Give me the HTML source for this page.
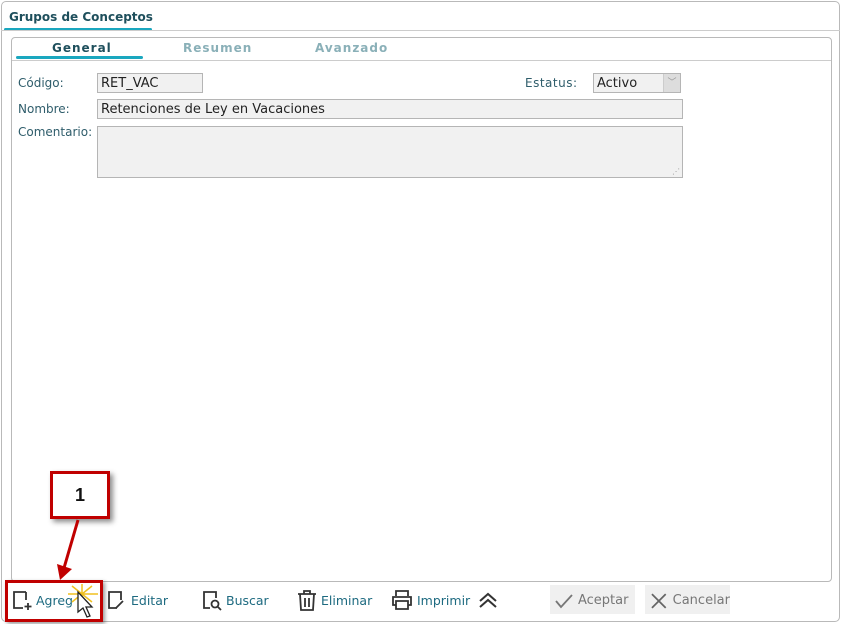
<!DOCTYPE html>
<html><head><meta charset="utf-8"><style>
*{box-sizing:border-box;margin:0;padding:0}
body{width:841px;height:624px;background:#fff;position:relative;overflow:hidden;font-family:"DejaVu Sans","Liberation Sans",sans-serif;font-size:12px;color:#333}
.a{position:absolute}
.lbl{color:#2f5d6b;font-size:12px}
.inp{background:#f1f1f1;border:1px solid #b5b5b5;font-size:13px;color:#222;padding:2px 3px 0;font-family:"DejaVu Sans",sans-serif}
.tb{position:absolute;top:589px;height:22px;display:flex;align-items:center;color:#1d6a80;font-size:12.5px}
.tb svg{margin-right:4px}
</style></head><body>
<div class="a" style="left:1px;top:1px;width:839px;height:621px;border:1px solid #b9b9b9;border-radius:5px"></div>
<div class="a" style="left:9px;top:10px;font-weight:bold;font-size:12px;color:#1e4f5c">Grupos de Conceptos</div>
<div class="a" style="left:4px;top:28px;width:148px;height:3px;background:#1aa7bf;border-radius:2px"></div>
<div class="a" style="left:1px;top:30px;width:839px;height:1px;background:#ccc"></div>
<div class="a" style="left:11px;top:37px;width:821px;height:545px;border:1px solid #b9b9b9;border-radius:4px"></div>
<div class="a" style="left:12px;top:60px;width:819px;height:1px;background:#ccc"></div>
<div class="a" style="left:52px;top:41px;font-weight:bold;font-size:12px;color:#1e4f5c;letter-spacing:1px">General</div>
<div class="a" style="left:183px;top:41px;font-weight:bold;font-size:12px;color:#8ab0b8;letter-spacing:1px">Resumen</div>
<div class="a" style="left:315px;top:41px;font-weight:bold;font-size:12px;color:#8ab0b8;letter-spacing:1px">Avanzado</div>
<div class="a" style="left:16px;top:56px;width:127px;height:3px;background:#1aa7bf;border-radius:2px"></div>

<div class="a lbl" style="left:18px;top:76px">Código:</div>
<div class="a inp" style="left:97px;top:73px;width:106px;height:20px">RET_VAC</div>
<div class="a lbl" style="left:525px;top:76px;letter-spacing:0.5px">Estatus:</div>
<div class="a inp" style="left:593px;top:73px;width:88px;height:20px">Activo</div>
<div class="a" style="left:663px;top:74px;width:17px;height:18px;background:#ddd;border-left:1px solid #ccc;color:#999;font-size:9px;text-align:center;line-height:18px">﹀</div>
<div class="a lbl" style="left:18px;top:102px">Nombre:</div>
<div class="a inp" style="left:97px;top:99px;width:586px;height:20px">Retenciones de Ley en Vacaciones</div>
<div class="a lbl" style="left:18px;top:125px">Comentario:</div>
<div class="a inp" style="left:97px;top:126px;width:586px;height:52px"></div>
<div class="a" style="left:672px;top:167px;color:#999;font-size:8px">⋰</div>

<div class="tb" style="left:12px">
<svg width="20" height="22" viewBox="0 0 20 22" fill="none" stroke="#333" stroke-width="1.8"><path d="M14 3H2v16h9"/><path d="M14 3v8"/><path d="M16 14v7M12.5 17.5h7"/></svg>Agreg</div>
<div class="tb" style="left:107px">
<svg width="20" height="22" viewBox="0 0 20 22" fill="none" stroke="#333" stroke-width="1.8"><path d="M10 19H2V3h12v8"/><path d="M9 19l7-7"/></svg>Editar</div>
<div class="tb" style="left:202px">
<svg width="20" height="22" viewBox="0 0 20 22" fill="none" stroke="#333" stroke-width="1.8"><path d="M8 19H2V3h12v6"/><circle cx="13" cy="15" r="3.5"/><path d="M15.5 17.5L19 21"/></svg>Buscar</div>
<div class="tb" style="left:297px">
<svg width="20" height="22" viewBox="0 0 20 22" fill="none" stroke="#333" stroke-width="1.8"><path d="M1 5h18M7 5V2h6v3M3 5l1 16h12l1-16M8 9v9M12 9v9"/></svg>Eliminar</div>
<div class="tb" style="left:391px">
<svg width="22" height="22" viewBox="0 0 22 22" fill="none" stroke="#333" stroke-width="1.8"><path d="M5 7V2h12v5M5 16H2V8h18v8h-3M5 12h12v8H5z"/></svg>Imprimir</div>
<svg class="a" style="left:478px;top:591px" width="20" height="18" viewBox="0 0 20 18" fill="none" stroke="#333" stroke-width="2"><path d="M2 10l8-7 8 7M2 16l8-7 8 7"/></svg>
<div class="a" style="left:550px;top:585px;width:85px;height:29px;background:#f0f0f0;color:#777;font-size:13px;display:flex;align-items:center;padding:2px 0 0 4px">
<svg width="20" height="18" viewBox="0 0 20 18" fill="none" stroke="#777" stroke-width="1.8" style="margin-right:4px"><path d="M2 9l5 6L18 3"/></svg>Aceptar</div>
<div class="a" style="left:645px;top:585px;width:85px;height:29px;background:#f0f0f0;color:#777;font-size:13px;display:flex;align-items:center;padding:2px 0 0 4px">
<svg width="20" height="18" viewBox="0 0 20 18" fill="none" stroke="#666" stroke-width="1.8" style="margin-right:4px"><path d="M3 2l14 14M17 2L3 16"/></svg>Cancelar</div>

<div class="a" style="left:5px;top:580px;width:98px;height:42px;border:3px solid #c00000;box-shadow:2px 2px 4px rgba(0,0,0,.4)"></div>
<div class="a" style="left:50px;top:471px;width:60px;height:48px;border:3px solid #c00000;background:#fff;box-shadow:3px 3px 5px rgba(0,0,0,.45);text-align:center;line-height:42px;font-family:'Liberation Sans',sans-serif;font-weight:bold;font-size:18px;color:#111">1</div>
<svg class="a" style="left:50px;top:518px" width="40" height="64" viewBox="0 0 40 64"><path d="M28 2L14 50" stroke="#c00000" stroke-width="3"/><path d="M7 46l3 16 12-11z" fill="#c00000"/></svg>
<svg class="a" style="left:64px;top:582px" width="36" height="40" viewBox="0 0 36 40"><g stroke="#f0c020" stroke-width="1.5"><path d="M4 12h30M18 2v22M8 4l20 16M28 4L8 20"/></g><path d="M14 10v20l5-4 4 9 3-1-4-9h6z" fill="#fff" stroke="#222" stroke-width="1.3"/></svg>
</body></html>
